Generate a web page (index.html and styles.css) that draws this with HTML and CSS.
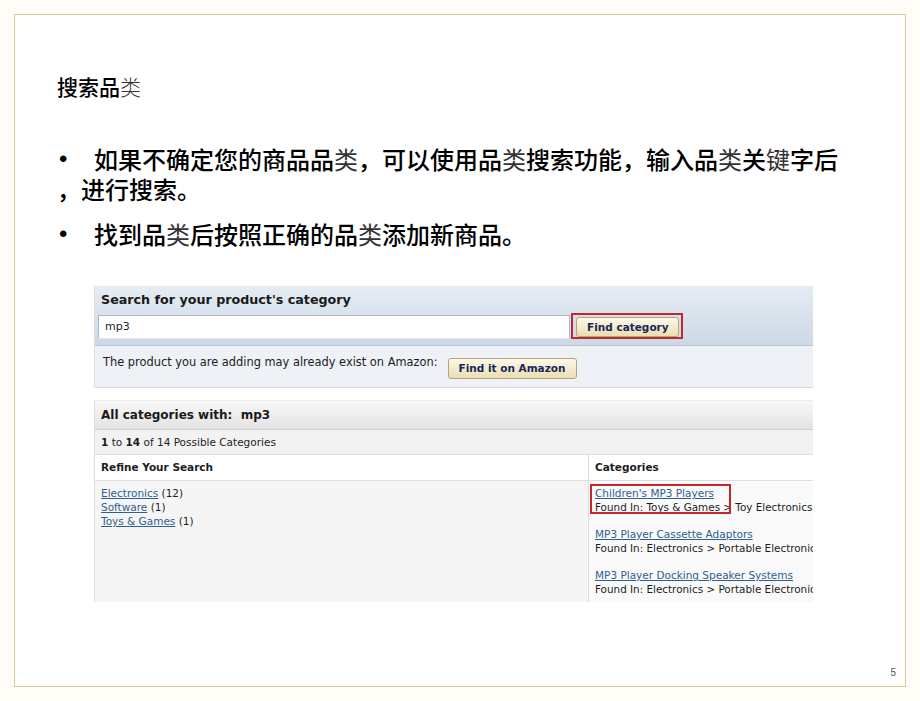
FILE: index.html
```html
<!DOCTYPE html>
<html lang="zh-CN">
<head>
<meta charset="utf-8">
<title>搜索品类</title>
<link rel="stylesheet" href="styles.css">
</head>
<body>
<div class="slide">
  <h1 class="title">搜索品<span class="alt">类</span></h1>
  <ul class="bullets">
    <li><span class="dot">•</span>如果不确定您的商品品<span class="alt">类</span>，可以使用品<span class="alt">类</span>搜索功能，输入品<span class="alt">类</span>关<span class="alt">键</span>字后<br>，进行搜索。</li>
    <li><span class="dot">•</span>找到品<span class="alt">类</span>后按照正确的品<span class="alt">类</span>添加新商品。</li>
  </ul>

  <div class="shot">
    <div class="panel search">
      <div class="search-top">
        <div class="search-head">Search for your product's category</div>
        <div class="search-row">
          <div class="input">mp3</div>
          <div class="hl-box"><span class="btn btn-find">Find category</span></div>
        </div>
      </div>
      <div class="exist-row">
        <span class="exist-text">The product you are adding may already exist on Amazon:</span>
        <span class="btn btn-amazon">Find it on Amazon</span>
      </div>
    </div>

    <div class="panel results">
      <div class="res-head">All categories with:&nbsp; mp3</div>
      <div class="res-count"><b>1</b> to <b>14</b> of 14 Possible Categories</div>
      <div class="res-cols">
        <div class="col-left">
          <div class="col-head">Refine Your Search</div>
          <div class="col-body left-body">
            <div><a>Electronics</a> (12)</div>
            <div><a>Software</a> (1)</div>
            <div><a>Toys &amp; Games</a> (1)</div>
          </div>
        </div>
        <div class="col-right">
          <div class="col-head">Categories</div>
          <div class="col-body right-body">
            <div class="cat first">
              <a>Children's MP3 Players</a>
              <div class="found">Found In: Toys &amp; Games &gt; Toy Electronics</div>
              <span class="hl-overlay"></span>
            </div>
            <div class="cat">
              <a>MP3 Player Cassette Adaptors</a>
              <div class="found">Found In: Electronics &gt; Portable Electronic Devices</div>
            </div>
            <div class="cat">
              <a>MP3 Player Docking Speaker Systems</a>
              <div class="found">Found In: Electronics &gt; Portable Electronic Devices</div>
            </div>
          </div>
        </div>
      </div>
    </div>
  </div>

  <div class="page-num">5</div>
</div>
</body>
</html>
```

FILE: styles.css
```css
html, body {
  margin: 0;
  padding: 0;
}
body {
  background: #fffdf8;
  width: 920px;
  height: 701px;
  overflow: hidden;
}
.slide {
  box-sizing: border-box;
  margin: 14px 0 0 14px;
  width: 892px;
  height: 673px;
  border: 1px solid #dccb98;
  background: #ffffff;
  display: flex;
  flex-direction: column;
  padding: 0 0 0 42px;
  font-family: "Liberation Sans", "Noto Sans CJK SC", sans-serif;
  color: #000;
}
.title {
  margin: 59px 0 0 0;
  font-size: 21px;
  line-height: 24px;
  font-weight: 500;
  font-family: "Noto Sans CJK SC", sans-serif;
}
.alt {
  font-weight: 400;
  color: #333;
}
.title .alt {
  font-weight: 300;
}
.bullets {
  list-style: none;
  margin: 46px 0 0 0;
  padding: 0;
  font-family: "Noto Sans CJK SC", sans-serif;
  font-size: 24px;
  line-height: 30px;
  font-weight: 500;
}
.bullets li {
  margin: 0 0 15px 0;
}
.dot {
  display: inline-block;
  vertical-align: top;
  width: 37px;
  padding-left: 2px;
  box-sizing: border-box;
  font-family: "Liberation Sans", sans-serif;
  font-weight: 400;
  font-size: 24px;
  line-height: 30px;
}

/* embedded screenshot */
.shot {
  margin: 22px 0 0 37px;
  width: 719px;
  overflow: hidden;
  font-family: "DejaVu Sans", Verdana, sans-serif;
  color: #1d1d1d;
}
.panel {
  border-left: 1px solid #d8dee6;
}
.search-top {
  background: linear-gradient(#e6ecf3, #ccd8e6);
  border-bottom: 1px solid #b7c5d5;
}
.search-head {
  height: 27px;
  line-height: 27px;
  padding-left: 6px;
  font-size: 12.7px;
  font-weight: 700;
  color: #1a1a1a;
  white-space: nowrap;
}
.search-row {
  box-sizing: border-box;
  display: flex;
  align-items: flex-end;
  height: 32px;
  padding: 0 0 6px 3px;
}
.input {
  width: 464px;
  height: 22px;
  line-height: 22px;
  background: #fff;
  border: 1px solid #a9b8c9;
  border-bottom-color: #dfe5ec;
  padding-left: 6px;
  font-size: 11px;
}
.hl-box {
  margin-left: 1px;
  border: 2px solid #c4262e;
  padding: 2px 2px 0 3px;
  display: flex;
}
.btn {
  display: inline-block;
  white-space: nowrap;
  height: 18px;
  line-height: 18px;
  padding: 0 10px;
  border: 1px solid #b3a57a;
  border-radius: 3px;
  background: linear-gradient(#fdf9ea, #e9ddb3);
  font-size: 10.5px;
  font-weight: 700;
  color: #17275a;
}
.btn-find {
  width: 81px;
  text-align: center;
}
.exist-row {
  display: flex;
  align-items: flex-start;
  height: 41px;
  background: #eef1f6;
  border-bottom: 1px solid #d3dae3;
  padding-left: 8px;
  font-size: 11.4px;
  white-space: nowrap;
}
.exist-text {
  margin-top: 9px;
}
.btn-amazon {
  margin: 12px 0 0 10px;
  height: 19px;
  line-height: 19px;
}

.results {
  margin-top: 12px;
  border-top: 1px solid #ececec;
}
.res-head {
  height: 28px;
  line-height: 28px;
  padding-left: 6px;
  background: linear-gradient(#f8f8f8, #e3e3e3);
  border-bottom: 1px solid #cfcfcf;
  font-size: 12px;
  font-weight: 700;
  color: #1a1a1a;
}
.res-count {
  height: 24px;
  line-height: 24px;
  padding-left: 6px;
  background: #f2f2f2;
  border-bottom: 1px solid #e0e0e0;
  font-size: 10.5px;
}
.res-cols {
  display: flex;
  height: 147px;
}
.col-left {
  flex: 0 0 493px;
  border-right: 1px solid #dcdcdc;
  display: flex;
  flex-direction: column;
}
.col-right {
  flex: 1 1 auto;
  min-width: 0;
  overflow: hidden;
  display: flex;
  flex-direction: column;
  white-space: nowrap;
}
.col-head {
  height: 25px;
  line-height: 25px;
  padding-left: 6px;
  background: #fff;
  border-bottom: 1px solid #dedede;
  font-size: 10.5px;
  font-weight: 700;
}
.col-body {
  flex: 1;
  padding: 5px 0 0 6px;
  font-size: 10.5px;
  line-height: 14px;
}
.left-body {
  background: #f5f5f5;
}
.right-body {
  background: #f9f9f9;
}
a {
  color: #2f5f8f;
  text-decoration: underline;
}
.cat {
  margin-bottom: 13px;
  position: relative;
}
.found {
  font-size: 10.4px;
}
.hl-overlay {
  position: absolute;
  left: -5px;
  top: -2px;
  width: 137px;
  height: 26px;
  border: 2px solid #c4262e;
  pointer-events: none;
}

.page-num {
  margin-top: auto;
  align-self: flex-end;
  margin-right: 9px;
  margin-bottom: 8px;
  font-size: 10px;
  color: #555;
  font-family: "Liberation Sans", sans-serif;
}
```
